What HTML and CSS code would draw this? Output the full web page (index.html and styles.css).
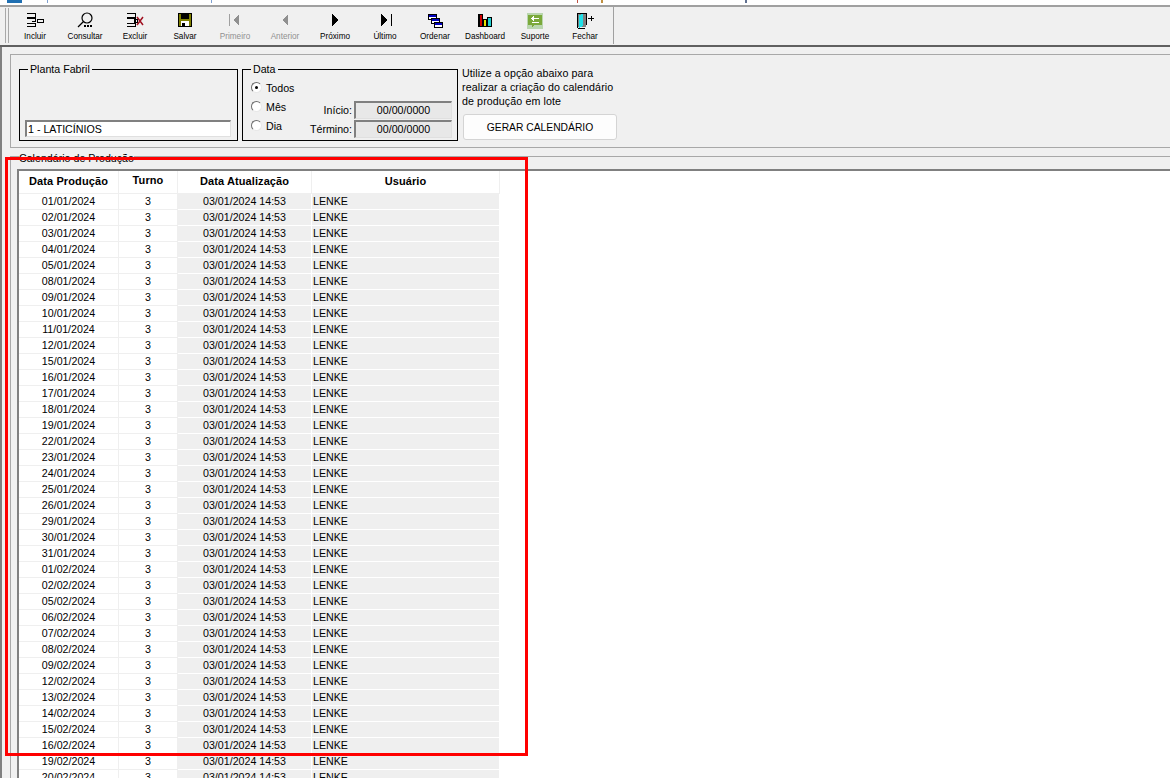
FILE: index.html
```html
<!DOCTYPE html>
<html lang="pt-BR">
<head>
    <meta charset="UTF-8">
    <title>Calendário de Produção</title>
    <link rel="stylesheet" href="styles.css">
</head>
<body>
    <div class="title-strip"></div>

    <div class="toolbar">
        <div class="grip"></div>
        <div class="tool">
            <svg class="icon" viewBox="0 0 24 18"><path class="ln" d="M4 2.500h8v3.500h-8M4 7.500h8v3M4 12.500h8v3h-8M9 10.500h4"/><rect class="ln" x="14.500" y="8.500" width="6" height="3"/></svg>
            <span>Incluir</span>
        </div>
        <div class="tool">
            <svg class="icon" viewBox="0 0 24 18"><circle class="ln-aa" cx="14" cy="7" r="5"/><path class="ln-aa" d="M10.500 10.500L5 16"/><path d="M11 14h2v2h-2zM14 14h2v2h-2zM17 14h2v2h-2z"/></svg>
            <span>Consultar</span>
        </div>
        <div class="tool">
            <svg class="icon" viewBox="0 0 24 18"><path class="ln" d="M4 2.500h8v3.500h-8M4 7.500h8v3M4 12.500h8v3h-8"/><rect class="ln" x="11.500" y="8.500" width="3" height="3"/><path class="ln-red" d="M14 6l6 8M20 6l-6 8"/></svg>
            <span>Excluir</span>
        </div>
        <div class="tool">
            <svg class="icon" viewBox="0 0 24 18"><rect x="5" y="2" width="14" height="14"/><rect x="6" y="3" width="12" height="12" fill="#808000"/><rect x="8" y="3" width="8" height="5"/><rect x="8" y="10" width="8" height="5" fill="#fff"/><rect x="9" y="12" width="3" height="3"/></svg>
            <span>Salvar</span>
        </div>
        <div class="tool off">
            <svg class="icon" viewBox="0 0 24 18"><path class="g-bar" d="M6 3h1v12H6z"/><path class="g-fill" d="M16 3v12l-6-6z"/></svg>
            <span>Primeiro</span>
        </div>
        <div class="tool off">
            <svg class="icon" viewBox="0 0 24 18"><path class="g-fill" d="M15 3v12l-6-6z"/></svg>
            <span>Anterior</span>
        </div>
        <div class="tool">
            <svg class="icon" viewBox="0 0 24 18"><path d="M9 3v12l6-6z"/></svg>
            <span>Próximo</span>
        </div>
        <div class="tool">
            <svg class="icon" viewBox="0 0 24 18"><path d="M8 3v12l6-6zM18 3h1v12h-1z"/></svg>
            <span>Último</span>
        </div>
        <div class="tool">
            <svg class="icon" viewBox="0 0 24 18"><rect class="win" x="5.500" y="3.500" width="8" height="5"/><rect x="6" y="4" width="7" height="2" fill="#0000c0"/><rect class="win" x="8.500" y="7.500" width="8" height="5"/><rect x="9" y="8" width="7" height="2" fill="#0000c0"/><rect class="win" x="11.500" y="11.500" width="8" height="5"/><rect x="12" y="12" width="7" height="2" fill="#0000c0"/></svg>
            <span>Ordenar</span>
        </div>
        <div class="tool">
            <svg class="icon" viewBox="0 0 24 18"><path class="ln" d="M5.500 3v12.500H19"/><rect x="7" y="4" width="2" height="11" fill="#d00000"/><rect class="ln" x="6.500" y="3.500" width="3" height="12"/><rect x="11" y="9" width="2" height="6" fill="#e8e000"/><rect class="ln" x="10.500" y="8.500" width="3" height="7"/><rect x="15" y="7" width="3" height="8" fill="#20d0d0"/><rect class="ln" x="14.500" y="6.500" width="4" height="9"/></svg>
            <span>Dashboard</span>
        </div>
        <div class="tool">
            <svg class="icon" viewBox="0 0 24 18"><rect x="4" y="2" width="16" height="16" fill="#b9d6ae"/><path d="M5 4h14v10h-8l-2 2v-2H5z" fill="#7ba93a"/><path class="ln-white" d="M16 7.500H9M11 5.500l-2 2 2 2M9 11.500h7"/></svg>
            <span>Suporte</span>
        </div>
        <div class="tool">
            <svg class="icon" viewBox="0 0 24 18"><rect x="5" y="2" width="8" height="14" fill="#808080"/><path d="M6 4l4-1v12l-4 2z" fill="#20e0e8"/><path class="ln" d="M4.500 16.500V2.500h8.500v11M4.500 17.500h7"/><path d="M15 7h3V5h1v2h2v1h-2v2h-1V8h-3z"/></svg>
            <span>Fechar</span>
        </div>
    </div>

    <div class="workspace">
        <div class="filter-panel">
            <fieldset class="box plant-box">
                <legend>Planta Fabril</legend>
                <div class="field plant-field">1 - LATICÍNIOS</div>
            </fieldset>

            <fieldset class="box date-box">
                <legend>Data</legend>
                <div class="radios">
                    <div class="radio on"><i></i>Todos</div>
                    <div class="radio"><i></i>Mês</div>
                    <div class="radio"><i></i>Dia</div>
                </div>
                <div class="dates">
                    <div class="date-row">Início:<div class="field date-field">00/00/0000</div></div>
                    <div class="date-row">Término:<div class="field date-field">00/00/0000</div></div>
                </div>
            </fieldset>

            <div class="batch">
                <p>Utilize a opção abaixo para<br>realizar a criação do calendário<br>de produção em lote</p>
                <button class="batch-btn">GERAR CALENDÁRIO</button>
            </div>
        </div>

        <fieldset class="grid-panel">
            <legend>Calendário de Produção</legend>
            <div class="grid-frame">
                <table class="grid">
                    <thead>
                        <tr><th class="c-date">Data Produção</th><th class="c-shift">Turno</th><th class="c-upd">Data Atualização</th><th class="c-user">Usuário</th></tr>
                    </thead>
                    <tbody>
                        <tr><td>01/01/2024</td><td>3</td><td>03/01/2024 14:53</td><td>LENKE</td></tr>
                        <tr><td>02/01/2024</td><td>3</td><td>03/01/2024 14:53</td><td>LENKE</td></tr>
                        <tr><td>03/01/2024</td><td>3</td><td>03/01/2024 14:53</td><td>LENKE</td></tr>
                        <tr><td>04/01/2024</td><td>3</td><td>03/01/2024 14:53</td><td>LENKE</td></tr>
                        <tr><td>05/01/2024</td><td>3</td><td>03/01/2024 14:53</td><td>LENKE</td></tr>
                        <tr><td>08/01/2024</td><td>3</td><td>03/01/2024 14:53</td><td>LENKE</td></tr>
                        <tr><td>09/01/2024</td><td>3</td><td>03/01/2024 14:53</td><td>LENKE</td></tr>
                        <tr><td>10/01/2024</td><td>3</td><td>03/01/2024 14:53</td><td>LENKE</td></tr>
                        <tr><td>11/01/2024</td><td>3</td><td>03/01/2024 14:53</td><td>LENKE</td></tr>
                        <tr><td>12/01/2024</td><td>3</td><td>03/01/2024 14:53</td><td>LENKE</td></tr>
                        <tr><td>15/01/2024</td><td>3</td><td>03/01/2024 14:53</td><td>LENKE</td></tr>
                        <tr><td>16/01/2024</td><td>3</td><td>03/01/2024 14:53</td><td>LENKE</td></tr>
                        <tr><td>17/01/2024</td><td>3</td><td>03/01/2024 14:53</td><td>LENKE</td></tr>
                        <tr><td>18/01/2024</td><td>3</td><td>03/01/2024 14:53</td><td>LENKE</td></tr>
                        <tr><td>19/01/2024</td><td>3</td><td>03/01/2024 14:53</td><td>LENKE</td></tr>
                        <tr><td>22/01/2024</td><td>3</td><td>03/01/2024 14:53</td><td>LENKE</td></tr>
                        <tr><td>23/01/2024</td><td>3</td><td>03/01/2024 14:53</td><td>LENKE</td></tr>
                        <tr><td>24/01/2024</td><td>3</td><td>03/01/2024 14:53</td><td>LENKE</td></tr>
                        <tr><td>25/01/2024</td><td>3</td><td>03/01/2024 14:53</td><td>LENKE</td></tr>
                        <tr><td>26/01/2024</td><td>3</td><td>03/01/2024 14:53</td><td>LENKE</td></tr>
                        <tr><td>29/01/2024</td><td>3</td><td>03/01/2024 14:53</td><td>LENKE</td></tr>
                        <tr><td>30/01/2024</td><td>3</td><td>03/01/2024 14:53</td><td>LENKE</td></tr>
                        <tr><td>31/01/2024</td><td>3</td><td>03/01/2024 14:53</td><td>LENKE</td></tr>
                        <tr><td>01/02/2024</td><td>3</td><td>03/01/2024 14:53</td><td>LENKE</td></tr>
                        <tr><td>02/02/2024</td><td>3</td><td>03/01/2024 14:53</td><td>LENKE</td></tr>
                        <tr><td>05/02/2024</td><td>3</td><td>03/01/2024 14:53</td><td>LENKE</td></tr>
                        <tr><td>06/02/2024</td><td>3</td><td>03/01/2024 14:53</td><td>LENKE</td></tr>
                        <tr><td>07/02/2024</td><td>3</td><td>03/01/2024 14:53</td><td>LENKE</td></tr>
                        <tr><td>08/02/2024</td><td>3</td><td>03/01/2024 14:53</td><td>LENKE</td></tr>
                        <tr><td>09/02/2024</td><td>3</td><td>03/01/2024 14:53</td><td>LENKE</td></tr>
                        <tr><td>12/02/2024</td><td>3</td><td>03/01/2024 14:53</td><td>LENKE</td></tr>
                        <tr><td>13/02/2024</td><td>3</td><td>03/01/2024 14:53</td><td>LENKE</td></tr>
                        <tr><td>14/02/2024</td><td>3</td><td>03/01/2024 14:53</td><td>LENKE</td></tr>
                        <tr><td>15/02/2024</td><td>3</td><td>03/01/2024 14:53</td><td>LENKE</td></tr>
                        <tr><td>16/02/2024</td><td>3</td><td>03/01/2024 14:53</td><td>LENKE</td></tr>
                        <tr><td>19/02/2024</td><td>3</td><td>03/01/2024 14:53</td><td>LENKE</td></tr>
                        <tr><td>20/02/2024</td><td>3</td><td>03/01/2024 14:53</td><td>LENKE</td></tr>
                    </tbody>
                </table>
            </div>
        </fieldset>
    </div>

    <div class="red-mark"></div>
</body>
</html>
```

FILE: styles.css
```css
html, body {
    height: 778px;
    overflow: hidden;
}
body {
    margin: 0;
    position: relative;
    background: #f0f0f0;
    color: #000;
    font-family: "Liberation Sans", Arial, sans-serif;
    font-size: 10.67px;
}

/* clipped bits of the window title above the toolbar */
.title-strip {
    height: 5px;
    background-color: #fff;
    background-repeat: no-repeat;
    background-image:
        linear-gradient(#1f6fb2, #1f6fb2),
        linear-gradient(#7fa0d0, #7fa0d0),
        linear-gradient(#7fa0d0, #7fa0d0),
        linear-gradient(#c05040, #c05040),
        linear-gradient(#c09040, #c09040),
        linear-gradient(#607090, #607090);
    background-size: 15px 3px, 1px 3px, 1px 3px, 1px 3px, 2px 3px, 2px 3px;
    background-position: 7px 0, 47px 0, 211px 0, 577px 0, 601px 0, 745px 0;
}

.toolbar {
    display: flex;
    height: 38px;
    padding-left: 5px;
    border-top: 2px solid #a0a0a0;
    border-bottom: 2px solid #606060;
}
.grip {
    width: 2px;
    height: 35px;
    margin: 1px 1px 0 0;
    border-left: 1px solid #a8a8a8;
    border-right: 1px solid #a8a8a8;
}
.tool {
    width: 50px;
    display: flex;
    flex-direction: column;
    align-items: center;
    font-size: 8.2px;
    line-height: 10px;
}
.tool:last-child {
    padding-right: 3px;
    border-right: 1px solid #a0a0a0;
    height: 37px;
}
.tool span {
    margin-top: 3px;
}
.tool.off {
    color: #909090;
}
.icon {
    width: 24px;
    height: 18px;
    margin-top: 4px;
    shape-rendering: crispEdges;
}
.ln, .ln-aa, .ln-red, .ln-white {
    fill: none;
    stroke: #000;
}
.ln-aa {
    shape-rendering: auto;
    stroke-width: 1.2;
}
.ln-red {
    stroke: #a01020;
    stroke-width: 1.5;
    shape-rendering: auto;
}
.ln-white {
    stroke: #fff;
}
.win {
    fill: #fff;
    stroke: #000;
}
.g-bar {
    fill: #a0a0a0;
}
.g-fill {
    fill: #909090;
}

.workspace {
    height: 731px;
    border-left: 2px solid #808080;
    padding: 7px 0 0 8px;
}

.filter-panel {
    display: flex;
    height: 94px;
    padding: 7px 0 0 8px;
    box-sizing: border-box;
    border: 1px solid #a8a8a8;
    border-right: 0;
    gap: 4px;
}
.box {
    margin: 0;
    padding: 0;
    height: 79px;
    box-sizing: border-box;
    border: 1px solid #000;
    min-width: 0;
}
.box legend {
    margin-left: 8px;
    padding: 0 2px;
    line-height: 14px;
}
.plant-box {
    width: 219px;
    padding: 0 6px 3px 5px;
    display: flex;
    align-items: flex-end;
}
.plant-box legend {
    margin-left: 3px;
}
.field {
    box-sizing: border-box;
    border: 1px solid;
    border-color: #808080 #e0e0e0 #e0e0e0 #808080;
    border-top-width: 2px;
    border-left-width: 2px;
    line-height: 14px;
}
.plant-field {
    flex: 1;
    height: 17px;
    background: #fff;
    padding-left: 1px;
}
.date-box {
    width: 216px;
    padding: 0 5px 0 8px;
    display: flex;
    justify-content: space-between;
}
.date-box legend {
    margin-left: 0;
}
.radios {
    padding-top: 2px;
}
.radio {
    display: flex;
    align-items: center;
    gap: 4px;
    height: 19px;
}
.radio i {
    position: relative;
    width: 11px;
    height: 11px;
    box-sizing: border-box;
    border-radius: 50%;
    border: 1px solid;
    border-color: #707070 #e8e8e8 #e8e8e8 #707070;
    background: #fff;
}
.radio.on i::after {
    content: "";
    position: absolute;
    left: 3px;
    top: 3px;
    width: 3px;
    height: 3px;
    border-radius: 50%;
    background: #000;
}
.dates {
    padding-top: 24px;
}
.date-row {
    display: flex;
    justify-content: flex-end;
    align-items: center;
    gap: 2px;
    height: 19px;
}
.date-field {
    width: 98px;
    height: 18px;
    text-align: center;
    background: #e8e8e8;
    line-height: 15px;
}

.batch {
    width: 160px;
    margin-top: 4px;
}
.batch p {
    margin: 0;
    line-height: 14px;
    letter-spacing: 0.1px;
}
.batch-btn {
    display: block;
    width: 154px;
    height: 26px;
    margin: 6px 0 0 1px;
    padding: 0;
    background: #fdfdfd;
    border: 1px solid #d4d4d4;
    border-radius: 3px;
    font: inherit;
    font-size: 10.3px;
    color: #000;
}

.grid-panel {
    margin: 0;
    padding: 5px 0 0 6px;
    height: 642px;
    box-sizing: border-box;
    min-width: 0;
    border: 0;
    border-top: 1px solid #a8a8a8;
    border-left: 1px solid #a8a8a8;
}
.grid-panel legend {
    margin-left: 2px;
    padding: 4px 0 0;
    line-height: 12px;
}
.grid-frame {
    height: 620px;
    background: #fff;
    border-top: 2px solid #808080;
    border-left: 2px solid #808080;
}
.grid {
    border-collapse: separate;
    border-spacing: 0;
    table-layout: fixed;
    width: 481px;
}
.c-date { width: 99px; }
.c-shift { width: 58px; }
.c-upd { width: 133px; }
.c-user { width: 187px; }
.grid th {
    height: 20px;
    padding: 0 0 2px;
    font-size: 11px;
    letter-spacing: 0.1px;
    border-right: 1px solid #efefef;
    border-bottom: 1px solid #efefef;
}
.grid th.c-shift {
    padding-bottom: 4px;
    height: 18px;
}
.grid td {
    height: 15px;
    padding: 0;
    text-align: center;
    line-height: 15px;
    border-right: 1px solid #efefef;
    border-bottom: 1px solid #efefef;
}
.grid td:nth-child(3), .grid td:nth-child(4) {
    background: #efefef;
    border-color: #fff;
}
.grid td:nth-child(4) {
    text-align: left;
    padding-left: 1px;
}

/* annotation someone drew on the screenshot */
.red-mark {
    position: absolute;
    left: 5px;
    top: 157px;
    width: 517px;
    height: 593px;
    border: 3px solid #f00;
}
```
